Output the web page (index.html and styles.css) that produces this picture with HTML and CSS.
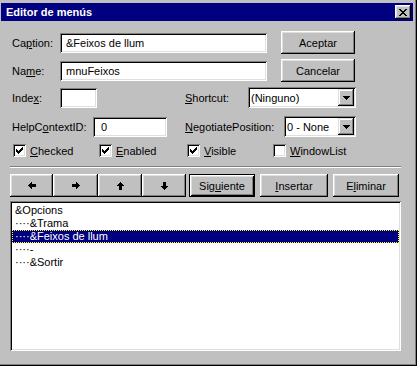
FILE: index.html
```html
<!DOCTYPE html>
<html lang="es">

<head>
  <meta charset="UTF-8">
  <title>Editor de menús</title>
  <link rel="stylesheet" href="styles.css">
</head>

<body>
  <div class="window">
    <div class="titlebar">
      <span class="title">Editor de menús</span>
      <span class="close">
        <svg width="8" height="7" viewBox="0 0 8 7" shape-rendering="crispEdges">
          <path d="M0 0h2v1h1v1h2v-1h1v-1h2v1h-1v1h-1v1h-1v1h1v1h1v1h1v1h-2v-1h-1v-1h-2v1h-1v1h-2v-1h1v-1h1v-1h1v-1h-1v-1h-1v-1h-1z" fill="#000" />
        </svg>
      </span>
    </div>

    <div class="content">
      <div class="row r1">
        <span class="lbl lbl-a">Ca<u>p</u>tion:</span>
        <div class="field f-wide">&amp;Feixos de llum</div>
        <div class="btn btn-side">Aceptar</div>
      </div>

      <div class="row r2">
        <span class="lbl lbl-a">Na<u>m</u>e:</span>
        <div class="field f-wide">mnuFeixos</div>
        <div class="btn btn-side">Cancelar</div>
      </div>

      <div class="row r3">
        <span class="lbl lbl-a">Inde<u>x</u>:</span>
        <div class="field f-index"></div>
        <span class="lbl lbl-short"><u>S</u>hortcut:</span>
        <div class="combo combo-short">
          <span class="combo-text">(Ninguno)</span>
          <span class="drop"><svg width="7" height="4" viewBox="0 0 7 4" shape-rendering="crispEdges"><path d="M0 0h7v1h-1v1h-1v1h-1v1h-1v-1h-1v-1h-1v-1h-1z" fill="#000" /></svg></span>
        </div>
      </div>

      <div class="row r4">
        <span class="lbl lbl-help">HelpC<u>o</u>ntextID:</span>
        <div class="field f-help">0</div>
        <span class="lbl lbl-neg"><u>N</u>egotiatePosition:</span>
        <div class="combo combo-neg">
          <span class="combo-text">0 - None</span>
          <span class="drop"><svg width="7" height="4" viewBox="0 0 7 4" shape-rendering="crispEdges"><path d="M0 0h7v1h-1v1h-1v1h-1v1h-1v-1h-1v-1h-1v-1h-1z" fill="#000" /></svg></span>
        </div>
      </div>

      <div class="checks">
        <div class="chk c1">
          <span class="box"><svg width="7" height="7" viewBox="0 0 7 7" shape-rendering="crispEdges"><path d="M6 0h1v3h-1v1h-1v1h-1v1h-1v1h-1v-1h-1v-1h-1v-3h1v1h1v1h1v-1h1v-1h1v-1h1z" fill="#000" /></svg></span>
          <span><u>C</u>hecked</span>
        </div>
        <div class="chk c2">
          <span class="box"><svg width="7" height="7" viewBox="0 0 7 7" shape-rendering="crispEdges"><path d="M6 0h1v3h-1v1h-1v1h-1v1h-1v1h-1v-1h-1v-1h-1v-3h1v1h1v1h1v-1h1v-1h1v-1h1z" fill="#000" /></svg></span>
          <span><u>E</u>nabled</span>
        </div>
        <div class="chk c3">
          <span class="box"><svg width="7" height="7" viewBox="0 0 7 7" shape-rendering="crispEdges"><path d="M6 0h1v3h-1v1h-1v1h-1v1h-1v1h-1v-1h-1v-1h-1v-3h1v1h1v1h1v-1h1v-1h1v-1h1z" fill="#000" /></svg></span>
          <span><u>V</u>isible</span>
        </div>
        <div class="chk">
          <span class="box"></span>
          <span><u>W</u>indowList</span>
        </div>
      </div>

      <div class="sep"></div>

      <div class="tools">
        <div class="btn arrow a1"><svg width="8" height="7" viewBox="0 0 8 7" shape-rendering="crispEdges"><path d="M3 0h1v2h4v3h-4v2h-1v-1h-1v-1h-1v-1h-1v-1h1v-1h1v-1h1z" fill="#000" /></svg></div>
        <div class="btn arrow a2"><svg width="8" height="7" viewBox="0 0 8 7" shape-rendering="crispEdges"><path d="M4 0h1v1h1v1h1v1h1v1h-1v1h-1v1h-1v1h-1v-2h-4v-3h4z" fill="#000" /></svg></div>
        <div class="btn arrow a3"><svg width="7" height="8" viewBox="0 0 7 8" shape-rendering="crispEdges"><path d="M3 0h1v1h1v1h1v1h1v1h-2v4h-3v-4h-2v-1h1v-1h1v-1h1z" fill="#000" /></svg></div>
        <div class="btn arrow a4"><svg width="7" height="8" viewBox="0 0 7 8" shape-rendering="crispEdges"><path d="M2 0h3v4h2v1h-1v1h-1v1h-1v1h-1v-1h-1v-1h-1v-1h-1v-1h2z" fill="#000" /></svg></div>
        <div class="btn btn-default">Sig<u>u</u>iente</div>
        <div class="btn btn-ins"><u>I</u>nsertar</div>
        <div class="btn btn-del">E<u>l</u>iminar</div>
      </div>

      <div class="list">
        <div class="item">&amp;Opcions</div>
        <div class="item">····&amp;Trama</div>
        <div class="item sel">····&amp;Feixos de llum</div>
        <div class="item">····-</div>
        <div class="item">····&amp;Sortir</div>
      </div>
    </div>
  </div>
</body>

</html>
```

FILE: styles.css
```css
* {
  box-sizing: border-box;
}

body {
  margin: 0;
  background: #c0c0c0;
  font-family: "Liberation Sans", Arial, sans-serif;
  font-size: 11px;
  color: #000;
}

u {
  text-underline-offset: 1px;
}

.window {
  width: 417px;
  height: 366px;
  background: #c0c0c0;
  padding: 3px 3px 0 1px;
  border-right: 1px solid #000;
  border-bottom: 1px solid #000;
  box-shadow: inset -1px -1px #808080;
}

.titlebar {
  height: 18px;
  background: #000080;
  color: #fff;
  display: flex;
  align-items: center;
  justify-content: space-between;
  padding: 0 2px 0 5px;
}

.title {
  font-weight: bold;
}

.close {
  width: 16px;
  height: 14px;
  background: #c0c0c0;
  display: flex;
  align-items: center;
  justify-content: center;
  box-shadow: inset -1px -1px #000, inset 1px 1px #fff, inset -2px -2px #808080, inset 2px 2px #dfdfdf;
}

.content {
  padding-left: 9px;
}

.row {
  display: flex;
  align-items: center;
  height: 23px;
}

.r1 { margin-top: 10px; }
.r2 { margin-top: 5px; }
.r3 { margin-top: 4px; }
.r4 { margin-top: 6px; }

.lbl {
  padding-left: 2px;
  white-space: nowrap;
}

.lbl-a { width: 50px; }
.lbl-short { margin-left: 86px; width: 65px; }
.lbl-help { width: 83px; }
.lbl-neg { margin-left: 16px; width: 101px; }

.field {
  height: 20px;
  background: #fff;
  padding: 0 4px 0 6px;
  display: flex;
  align-items: center;
  box-shadow: inset 1px 1px #808080, inset -1px -1px #fff, inset 2px 2px #000, inset -2px -2px #dfdfdf;
}

.f-wide { width: 207px; }
.f-index { width: 37px; }
.f-help { width: 74px; padding-left: 8px; }

.combo {
  height: 21px;
  background: #fff;
  padding: 2px;
  display: flex;
  align-items: center;
  box-shadow: inset 1px 1px #808080, inset -1px -1px #fff, inset 2px 2px #000, inset -2px -2px #dfdfdf;
}

.combo-short { width: 108px; }
.combo-neg { width: 72px; }

.combo-text {
  flex: 1;
  padding-left: 1px;
  white-space: nowrap;
}

.drop {
  width: 16px;
  height: 17px;
  background: #c0c0c0;
  display: flex;
  align-items: center;
  justify-content: center;
  box-shadow: inset -1px -1px #000, inset 1px 1px #dfdfdf, inset -2px -2px #808080, inset 2px 2px #fff;
}

.btn {
  height: 23px;
  background: #c0c0c0;
  display: flex;
  align-items: center;
  justify-content: center;
  box-shadow: inset -1px -1px #000, inset 1px 1px #fff, inset -2px -2px #808080, inset 2px 2px #dfdfdf;
}

.btn-side {
  margin-left: 14px;
  width: 74px;
}

.checks {
  display: flex;
  align-items: center;
  height: 13px;
  margin-top: 6px;
  padding-left: 3px;
}

.chk {
  display: flex;
  align-items: center;
  gap: 4px;
}

.c1 { width: 86px; }
.c2 { width: 88px; }
.c3 { width: 86px; }

.box {
  width: 13px;
  height: 13px;
  background: #fff;
  display: flex;
  align-items: center;
  justify-content: center;
  box-shadow: inset 1px 1px #808080, inset -1px -1px #fff, inset 2px 2px #000, inset -2px -2px #dfdfdf;
}

.sep {
  width: 391px;
  height: 2px;
  margin-top: 9px;
  border-top: 1px solid #808080;
  border-bottom: 1px solid #fff;
}

.tools {
  display: flex;
  margin-top: 6px;
}

.a1 { width: 43px; }
.a2 { width: 45px; }
.a3 { width: 44px; }
.a4 { width: 44px; }

.btn-default {
  margin-left: 3px;
  width: 66px;
  box-shadow: inset 1px 1px #000, inset -1px -1px #000, inset 2px 2px #fff, inset -2px -2px #000, inset 3px 3px #dfdfdf, inset -3px -3px #808080;
}

.btn-ins {
  margin-left: 5px;
  width: 68px;
}

.btn-del {
  margin-left: 5px;
  width: 66px;
}

.list {
  width: 391px;
  height: 150px;
  margin-top: 4px;
  padding: 3px 2px;
  background: #fff;
  box-shadow: inset 1px 1px #808080, inset -1px -1px #fff, inset 2px 2px #000, inset -2px -2px #dfdfdf;
}

.item {
  height: 13px;
  line-height: 13px;
  padding-left: 3px;
  white-space: nowrap;
}

.item.sel {
  background: #000080;
  color: #fff;
  outline: 1px dotted #ff0;
  outline-offset: -1px;
}
```
